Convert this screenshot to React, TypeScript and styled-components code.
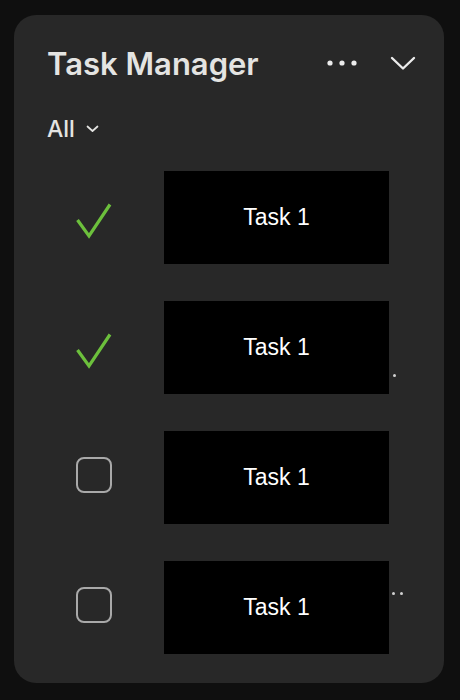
import React from "react";
import styled, { createGlobalStyle } from "styled-components";

const Global = createGlobalStyle`
  html, body { margin: 0; padding: 0; background: #0f0f0f; }
  body { font-family: Inter, "Noto Sans", sans-serif; }
`;

const Card = styled.div`
  box-sizing: border-box;
  margin: 15px 0 0 14px;
  width: 430px;
  height: 668px;
  background: #282828;
  border-radius: 22px;
  padding-top: 30px;
  display: flex;
  flex-direction: column;
`;

const Header = styled.div`
  display: flex;
  align-items: center;
  height: 36px;
  padding: 0 28px 0 33px;
`;

const Title = styled.h1`
  margin: 0;
  flex: 1;
  font-size: 31px;
  font-weight: 600;
  color: #e4e4e2;
`;

const IconButton = styled.button<{ $gap?: number }>`
  background: none;
  border: 0;
  padding: 0;
  display: flex;
  align-items: center;
  justify-content: center;
  color: #ececec;
  margin-left: ${(p) => p.$gap ?? 0}px;
`;

const Filter = styled.div`
  display: flex;
  align-items: center;
  gap: 11px;
  margin: 36px 0 0 33px;
  height: 24px;
  font-size: 23px;
  font-weight: 500;
  color: #e4e4e2;
`;

const List = styled.div`
  display: flex;
  flex-direction: column;
  gap: 37px;
  margin-top: 30px;
`;

const Row = styled.div`
  position: relative;
  display: flex;
  align-items: center;
  height: 93px;
  padding-left: 62px;
`;

const CheckCell = styled.div<{ $done: boolean }>`
  width: 36px;
  height: 36px;
  margin-right: 52px;
  display: flex;
  align-items: center;
  justify-content: center;
  position: relative;
  top: ${(p) => (p.$done ? 3 : -3)}px;
`;

const EmptyBox = styled.div`
  box-sizing: border-box;
  width: 36px;
  height: 36px;
  border: 2px solid #a9a9a9;
  border-radius: 8px;
`;

const TaskBox = styled.div`
  position: relative;
  z-index: 1;
  width: 225px;
  height: 93px;
  background: #000;
  color: #fff;
  display: flex;
  align-items: center;
  justify-content: center;
  font-family: "Liberation Sans", Arial, sans-serif;
  font-size: 23px;
`;

const MoreDots = styled.div<{ $top: number; $left: number }>`
  position: absolute;
  left: ${(p) => p.$left}px;
  top: ${(p) => p.$top}px;
  display: flex;
  gap: 5px;
`;

const Dot = styled.span`
  width: 3px;
  height: 3px;
  border-radius: 50%;
  background: #d0d0d0;
`;

const Check = () => (
  <svg width="36" height="36" viewBox="0 0 36 36">
    <polyline
      points="1.5,17 13,33 34,1.5"
      fill="none"
      stroke="#6cc03c"
      strokeWidth="3.2"
      strokeLinecap="butt"
      strokeLinejoin="miter"
    />
  </svg>
);

type Task = { done: boolean; dots: { top: number; left: number } | null };

const tasks: Task[] = [
  { done: true, dots: null },
  { done: true, dots: { top: 73, left: 363 } },
  { done: false, dots: null },
  { done: false, dots: { top: 31, left: 370 } },
];

export default function App() {
  return (
    <>
      <Global />
      <Card>
        <Header>
          <Title>Task Manager</Title>
          <IconButton aria-label="more">
            <svg width="30" height="8" viewBox="0 0 30 8">
              <circle cx="3" cy="4" r="2.6" fill="#ececec" />
              <circle cx="15" cy="4" r="2.6" fill="#ececec" />
              <circle cx="27" cy="4" r="2.6" fill="#ececec" />
            </svg>
          </IconButton>
          <IconButton aria-label="collapse" $gap={33}>
            <svg width="26" height="16" viewBox="0 0 26 16">
              <polyline
                points="2,3 13,13.5 24,3"
                fill="none"
                stroke="#ececec"
                strokeWidth="2.4"
                strokeLinecap="round"
                strokeLinejoin="round"
              />
            </svg>
          </IconButton>
        </Header>
        <Filter>
          All
          <svg width="13" height="8" viewBox="0 0 13 8">
            <polyline
              points="1.5,1.5 6.5,6 11.5,1.5"
              fill="none"
              stroke="#e4e4e2"
              strokeWidth="1.7"
              strokeLinecap="round"
              strokeLinejoin="round"
            />
          </svg>
        </Filter>
        <List>
          {tasks.map((t, i) => (
            <Row key={i}>
              <CheckCell $done={t.done}>{t.done ? <Check /> : <EmptyBox />}</CheckCell>
              <TaskBox>Task 1</TaskBox>
              {t.dots && (
                <MoreDots $top={t.dots.top} $left={t.dots.left}>
                  <Dot />
                  <Dot />
                  <Dot />
                </MoreDots>
              )}
            </Row>
          ))}
        </List>
      </Card>
    </>
  );
}
